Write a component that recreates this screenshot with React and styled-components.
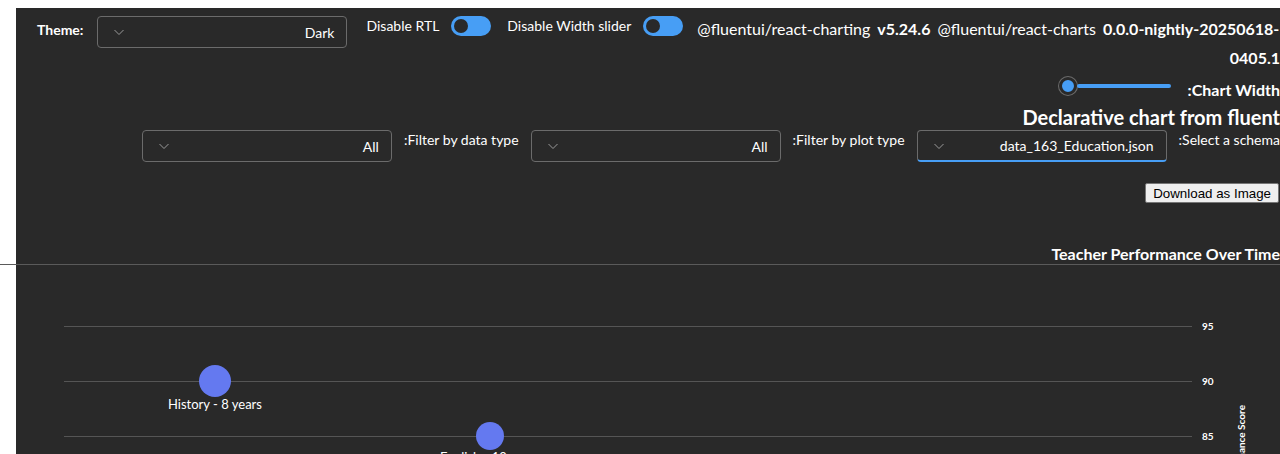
import React from "react";
import styled, { createGlobalStyle } from "styled-components";

const GlobalStyle = createGlobalStyle`
    html, body {
        margin: 0;
        background: #ffffff;
        overflow: hidden;
        font-family: 'Segoe UI', 'Lato', sans-serif;
    }
`;

const Chevron = () => (
    <svg width="12" height="12" viewBox="0 0 12 12">
        <path d="M1.5 4 L6 8.5 L10.5 4" fill="none" stroke="#9a9a9a" strokeWidth="1" />
    </svg>
);

const Dropdown = ({ value, focused }) => (
    <DropBox $focused={focused}>
        <Chevron />
        <DropValue>{value}</DropValue>
    </DropBox>
);

const Switch = () => (
    <Toggle>
        <Knob />
    </Toggle>
);

const App = () => {
    return (
        <>
            <GlobalStyle />
            <Shell>
                <Page>
                    <TopRow>
                        <Group>
                            <ThemeLabel>Theme:</ThemeLabel>
                            <Dropdown value="Dark" />
                        </Group>
                        <SwitchGroup>
                            <SwitchLabel>Disable RTL</SwitchLabel>
                            <Switch />
                        </SwitchGroup>
                        <SwitchGroup>
                            <SwitchLabel>Disable Width slider</SwitchLabel>
                            <Switch />
                        </SwitchGroup>
                        <Versions>
                            <VersionLine>
                                <span>@fluentui/react-charting</span>
                                <b>v5.24.6</b>
                                <span>@fluentui/react-charts</span>
                                <b>0.0.0-nightly-20250618-</b>
                            </VersionLine>
                            <VersionLine $end>
                                <b>0405.1</b>
                            </VersionLine>
                        </Versions>
                    </TopRow>

                    <SliderRow>
                        <Slider>
                            <Thumb />
                            <Track />
                        </Slider>
                        <WidthLabel>:Chart Width</WidthLabel>
                    </SliderRow>

                    <Heading>Declarative chart from fluent</Heading>

                    <FilterRow>
                        <Dropdown value="All" />
                        <FilterLabel>:Filter by data type</FilterLabel>
                        <Dropdown value="All" />
                        <FilterLabel>:Filter by plot type</FilterLabel>
                        <Dropdown value="data_163_Education.json" focused />
                        <FilterLabel>:Select a schema</FilterLabel>
                    </FilterRow>

                    <ButtonRow>
                        <DownloadBtn>Download as Image</DownloadBtn>
                    </ButtonRow>

                    <ChartTitle>Teacher Performance Over Time</ChartTitle>

                    <ChartFrame>
                        <svg width="1280" height="190" viewBox="0 0 1280 190">
                            {[61, 116, 171].map((y) => (
                                <line key={y} x1="64" x2="1192" y1={y + 0.5} y2={y + 0.5} stroke="#555555" strokeWidth="1" />
                            ))}
                            {[["95", 61], ["90", 116], ["85", 171]].map(([t, y]) => (
                                <text key={t} x="1202" y={y + 4} fill="#ffffff" fontSize="10" fontWeight="700" fontFamily="'Segoe UI', 'Lato', sans-serif">{t}</text>
                            ))}
                            <text
                                x="0"
                                y="0"
                                transform="translate(1245 140) rotate(-90)"
                                textAnchor="end"
                                fill="#ffffff"
                                fontSize="10"
                                fontWeight="700"
                                fontFamily="'Segoe UI', 'Lato', sans-serif"
                            >
                                Performance Score
                            </text>
                            <circle cx="215" cy="116" r="16" fill="#6479f0" />
                            <text x="215" y="144" textAnchor="middle" fill="#ffffff" fontSize="13" fontFamily="'Segoe UI', 'Lato', sans-serif">History - 8 years</text>
                            <circle cx="490" cy="171" r="14" fill="#6479f0" />
                            <text x="490" y="197" textAnchor="middle" fill="#ffffff" fontSize="13" fontFamily="'Segoe UI', 'Lato', sans-serif">English - 10 years</text>
                        </svg>
                    </ChartFrame>
                </Page>
            </Shell>
        </>
    );
};

export default App;

const Shell = styled.div`
    padding: 8px 0 0 16px;
    width: 1280px;
    box-sizing: border-box;
`;

const Page = styled.div`
    width: 1264px;
    min-height: 446px;
    background-color: #292929;
    color: #ffffff;
    display: flex;
    flex-direction: column;
`;

const TopRow = styled.div`
    display: flex;
    align-items: flex-start;
    padding: 8px 0 0 21px;
    height: 58px;
`;

const Group = styled.div`
    display: flex;
    align-items: center;
    gap: 14px;
`;

const ThemeLabel = styled.div`
    font-size: 14px;
    font-weight: 700;
    padding-bottom: 5px;
`;

const DropBox = styled.div`
    box-sizing: border-box;
    width: 250px;
    height: 32px;
    display: flex;
    align-items: center;
    justify-content: space-between;
    padding: 0 12px 0 15px;
    border: 1px solid #6b6b6b;
    border-bottom: ${(p) => (p.$focused ? "2px solid #479ef5" : "1px solid #6b6b6b")};
    border-radius: 4px;
    background-color: #292929;
    flex-shrink: 0;
`;

const DropValue = styled.span`
    font-size: 14px;
    color: #ffffff;
`;

const SwitchGroup = styled.div`
    display: flex;
    align-items: center;
    gap: 12px;
    margin-left: 19px;
    height: 20px;
    & + & {
        margin-left: 16px;
    }
`;

const SwitchLabel = styled.span`
    font-size: 14px;
    white-space: nowrap;
    padding-bottom: 2px;
`;

const Toggle = styled.div`
    box-sizing: border-box;
    width: 40px;
    height: 20px;
    border-radius: 10px;
    background-color: #479ef5;
    display: flex;
    align-items: center;
    padding-left: 3px;
`;

const Knob = styled.div`
    width: 14px;
    height: 14px;
    border-radius: 50%;
    background-color: #292929;
`;

const Versions = styled.div`
    margin: -2px 0 0 14px;
    flex: 1;
    font-size: 16px;
    line-height: 29px;
`;

const VersionLine = styled.div`
    display: flex;
    justify-content: ${(p) => (p.$end ? "flex-end" : "flex-start")};
    gap: 7px;
    white-space: nowrap;
    b {
        font-weight: 700;
    }
`;

const SliderRow = styled.div`
    display: flex;
    justify-content: flex-end;
    align-items: center;
    gap: 17px;
    height: 24px;
`;

const Slider = styled.div`
    display: flex;
    align-items: center;
    width: 112px;
`;

const Thumb = styled.div`
    box-sizing: border-box;
    width: 18px;
    height: 18px;
    border-radius: 50%;
    background-color: #479ef5;
    border: 3px solid #292929;
    box-shadow: 0 0 0 1px #6b6b6b;
    flex-shrink: 0;
`;

const Track = styled.div`
    flex: 1;
    height: 4px;
    border-radius: 2px;
    background-color: #479ef5;
`;

const WidthLabel = styled.span`
    font-size: 16px;
    font-weight: 700;
    padding-top: 6px;
    white-space: nowrap;
`;

const Heading = styled.div`
    margin-top: 6px;
    font-size: 20px;
    font-weight: 700;
    line-height: 26px;
    text-align: right;
    white-space: nowrap;
`;

const FilterRow = styled.div`
    display: flex;
    justify-content: flex-end;
    align-items: flex-start;
    gap: 12px;
    height: 32px;
`;

const FilterLabel = styled.span`
    font-size: 14px;
    padding-top: 1px;
    white-space: nowrap;
`;

const ButtonRow = styled.div`
    display: flex;
    justify-content: flex-end;
    margin-top: 21px;
`;

const DownloadBtn = styled.button`
    height: 20px;
    padding: 0 7px;
    font-family: 'Liberation Sans', Arial, sans-serif;
    font-size: 13.33px;
    color: #000000;
    background-color: #efefef;
    border: 1px solid #767676;
    border-radius: 2px;
    margin-right: 1px;
`;

const ChartTitle = styled.div`
    margin-top: 41px;
    font-size: 16px;
    font-weight: 700;
    line-height: 20px;
    text-align: right;
    white-space: nowrap;
`;

const ChartFrame = styled.div`
    margin-left: -16px;
    width: 1280px;
    border-top: 1px solid #5a5a5a;
    svg {
        display: block;
    }
`;
